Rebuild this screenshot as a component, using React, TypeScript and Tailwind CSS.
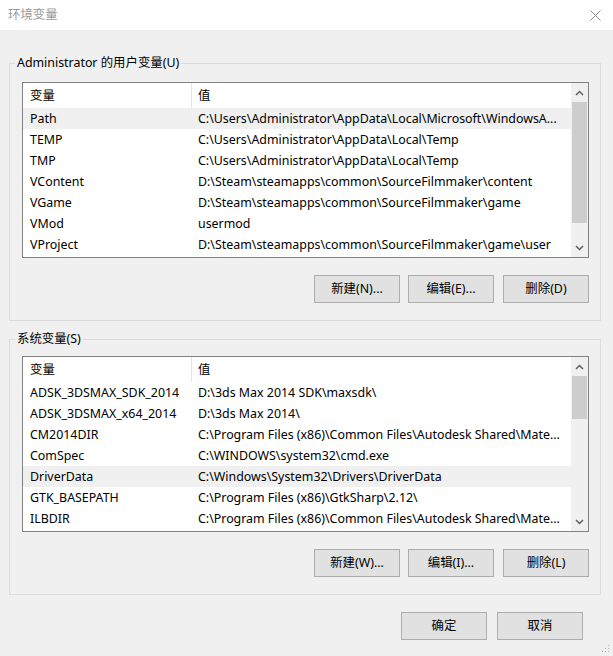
import React from "react";

type Row = { name: string; value: string; hl?: boolean };

const userVars: Row[] = [
  { name: "Path", value: "C:\\Users\\Administrator\\AppData\\Local\\Microsoft\\WindowsA...", hl: true },
  { name: "TEMP", value: "C:\\Users\\Administrator\\AppData\\Local\\Temp" },
  { name: "TMP", value: "C:\\Users\\Administrator\\AppData\\Local\\Temp" },
  { name: "VContent", value: "D:\\Steam\\steamapps\\common\\SourceFilmmaker\\content" },
  { name: "VGame", value: "D:\\Steam\\steamapps\\common\\SourceFilmmaker\\game" },
  { name: "VMod", value: "usermod" },
  { name: "VProject", value: "D:\\Steam\\steamapps\\common\\SourceFilmmaker\\game\\user" },
];

const sysVars: Row[] = [
  { name: "ADSK_3DSMAX_SDK_2014", value: "D:\\3ds Max 2014 SDK\\maxsdk\\" },
  { name: "ADSK_3DSMAX_x64_2014", value: "D:\\3ds Max 2014\\" },
  { name: "CM2014DIR", value: "C:\\Program Files (x86)\\Common Files\\Autodesk Shared\\Mate..." },
  { name: "ComSpec", value: "C:\\WINDOWS\\system32\\cmd.exe" },
  { name: "DriverData", value: "C:\\Windows\\System32\\Drivers\\DriverData", hl: true },
  { name: "GTK_BASEPATH", value: "C:\\Program Files (x86)\\GtkSharp\\2.12\\" },
  { name: "ILBDIR", value: "C:\\Program Files (x86)\\Common Files\\Autodesk Shared\\Mate..." },
];

function Chevron({ up }: { up?: boolean }) {
  return (
    <svg width="9" height="6" viewBox="0 0 9 6">
      <path
        d={up ? "M1 5 L4.5 1.5 L8 5" : "M1 1 L4.5 4.5 L8 1"}
        fill="none"
        stroke="#606060"
        strokeWidth="1.5"
      />
    </svg>
  );
}

function ListBox({ rows, thumbTop, thumbH }: { rows: Row[]; thumbTop: number; thumbH: number }) {
  return (
    <div className="flex h-[176px] border border-[#828282] bg-white">
      <div className="flex-1 flex flex-col overflow-hidden">
        <div className="flex h-[25px] shrink-0 items-center">
          <div className="w-[169px] h-full flex items-center pl-[7px] pt-[1px] border-r border-[#e5e5e5]">变量</div>
          <div className="flex-1 pl-[6px] pt-[1px]">值</div>
        </div>
        {rows.map((r) => (
          <div
            key={r.name}
            className={`flex h-[21px] shrink-0 items-center pt-[2px] whitespace-nowrap ${r.hl ? "bg-[#f0f0f0]" : ""}`}
          >
            <div className="w-[170px] pl-[7px] shrink-0">{r.name}</div>
            <div className="flex-1 pl-[5px] overflow-hidden">{r.value}</div>
          </div>
        ))}
      </div>
      <div className="w-[17px] flex flex-col bg-[#f0f0f0] pt-[1px] pb-[1px]">
        <div className="h-[17px] flex items-center justify-center">
          <Chevron up />
        </div>
        <div className="flex-1 flex flex-col px-[1px]">
          <div style={{ height: thumbTop }} />
          <div className="bg-[#cdcdcd]" style={{ height: thumbH }} />
        </div>
        <div className="h-[17px] flex items-center justify-center">
          <Chevron />
        </div>
      </div>
    </div>
  );
}

function Btn({ children, w = "w-[86px]" }: { children: React.ReactNode; w?: string }) {
  return (
    <div className={`${w} h-[28px] flex items-center justify-center bg-[#e1e1e1] border border-[#adadad] text-black`}>
      {children}
    </div>
  );
}

function Group({
  title,
  rows,
  buttons,
  thumbTop,
  thumbH,
  listMt,
}: {
  title: string;
  rows: Row[];
  buttons: string[];
  thumbTop: number;
  thumbH: number;
  listMt: string;
}) {
  return (
    <fieldset className="border border-[#dcdcdc] ml-[9px] mr-[12px] pl-[12px] pr-[11px] pb-[17px]">
      <legend className="-ml-[7px] px-[2px] leading-[16px]">{title}</legend>
      <div className={listMt}>
        <ListBox rows={rows} thumbTop={thumbTop} thumbH={thumbH} />
      </div>
      <div className="flex justify-end gap-[8px] mt-[17px]">
        {buttons.map((b, i) => (
          <div key={b} className={i === 1 ? "mr-[1px]" : ""}>
            <Btn>{b}</Btn>
          </div>
        ))}
      </div>
    </fieldset>
  );
}

export default function App() {
  return (
    <div
      className="w-[613px] h-[656px] bg-[#f0f0f0] flex flex-col text-[12.4px] text-black overflow-hidden"
      style={{ fontFamily: '"Noto Sans", "Noto Sans CJK SC", sans-serif' }}
    >
      <div className="h-[30px] bg-white flex items-center justify-between pl-[8px] pr-[12px] shrink-0">
        <span className="text-[#999999]">环境变量</span>
        <svg width="11" height="11" viewBox="0 0 11 11">
          <path d="M0.5 0.5 L10.5 10.5 M10.5 0.5 L0.5 10.5" stroke="#8a8a8a" strokeWidth="1" />
        </svg>
      </div>
      <div className="mt-[25px]">
        <Group
          title="Administrator 的用户变量(U)"
          rows={userVars}
          buttons={["新建(N)...", "编辑(E)...", "删除(D)"]}
          thumbTop={1}
          thumbH={121}
          listMt="mt-[11px]"
        />
      </div>
      <div className="mt-[10px]">
        <Group
          title="系统变量(S)"
          rows={sysVars}
          buttons={["新建(W)...", "编辑(I)...", "删除(L)"]}
          thumbTop={1}
          thumbH={43}
          listMt="mt-[9px]"
        />
      </div>
      <div className="flex justify-end gap-[10px] mr-[30px] mt-[17px]">
        <Btn>确定</Btn>
        <Btn>取消</Btn>
      </div>
      <div className="flex-1 flex items-end justify-end pr-[3px] pb-[3px]">
        <svg width="8" height="8" viewBox="0 0 8 8">
          <rect x="6" y="0" width="1" height="1" fill="#b0b0b0" />
          <rect x="3" y="3" width="1" height="1" fill="#b0b0b0" />
          <rect x="6" y="3" width="1" height="1" fill="#b0b0b0" />
          <rect x="0" y="6" width="1" height="1" fill="#b0b0b0" />
          <rect x="3" y="6" width="1" height="1" fill="#b0b0b0" />
          <rect x="6" y="6" width="1" height="1" fill="#b0b0b0" />
        </svg>
      </div>
    </div>
  );
}
